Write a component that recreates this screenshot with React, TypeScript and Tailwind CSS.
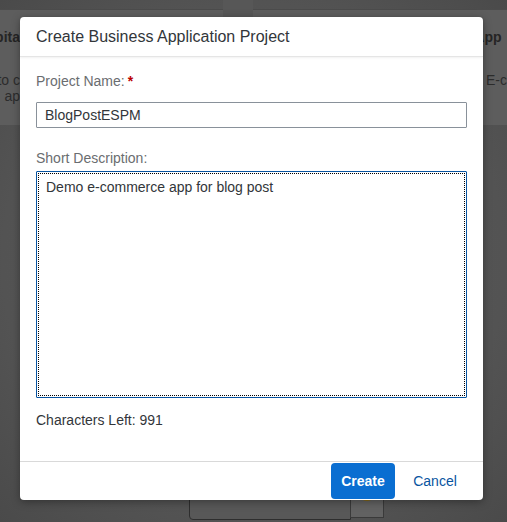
import React from 'react';

const font = { fontFamily: '"Liberation Sans", Arial, sans-serif' };

export default function App() {
  return (
    <div
      className="relative w-[507px] h-[522px] overflow-hidden bg-[radial-gradient(ellipse_at_center,#5b5b5b_0%,#535353_70%,#4a4a4a_100%)]"
      style={font}
    >
      {/* dimmed page behind the dialog */}
      <div className="flex h-[126px]">
        <div className="w-[232px] h-[116px] mt-[9px] bg-[#5d5d5d] border-t border-[#4c4c4c]">
          <div className="w-[20px] overflow-hidden">
            <div className="flex justify-end pt-[17px] text-[14px] font-bold text-[#252525] whitespace-nowrap">pita</div>
            <div className="mt-[24px] text-[14px] leading-[16px] text-[#2c2c2c] whitespace-nowrap">
              <div className="flex justify-end">to c</div>
              <div className="flex justify-end">ap</div>
            </div>
          </div>
        </div>
        <div className="w-[31px] bg-[#575757]" />
        <div className="flex-1 h-[116px] mt-[9px] bg-[#5d5d5d] border-t border-[#4c4c4c] pl-[221px]">
          <div className="overflow-hidden">
            <div className="pt-[17px] text-[14px] font-bold text-[#252525] whitespace-nowrap">App</div>
            <div className="mt-[24px] text-[14px] leading-[16px] text-[#2c2c2c] whitespace-nowrap">e E-c</div>
          </div>
        </div>
      </div>

      {/* illustration peeking out below */}
      <div className="absolute left-[189px] top-[480px] w-[162px] h-[40px] border border-[#2e2e2e] rounded-bl-[4px] bg-[#585858]" />
      <div className="absolute left-[350px] top-[490px] w-[34px] h-[28px] border border-[#3a3a3a] bg-[#626262] flex items-start justify-center">
        <div className="w-[16px] h-[16px] -mt-[6px] rounded-full border-[3px] border-[#8a6a10]" />
      </div>

      {/* dialog */}
      <div className="absolute left-[20px] top-[17px] w-[463px] h-[483px] bg-white rounded-[4px] shadow-[0_2px_8px_rgba(0,0,0,0.35)] flex flex-col">
        <header className="h-[40px] px-4 flex items-center border-b border-[#e5e5e5] shadow-[0_1px_2px_rgba(0,0,0,0.06)] text-[16px] text-[#32363a]">
          Create Business Application Project
        </header>

        <div className="flex-1 px-4 pt-[15px] flex flex-col">
          <label className="text-[14px] leading-[18px] text-[#6a6d70]">
            Project Name:<span className="text-[#bb0000] font-bold ml-[3px]">*</span>
          </label>
          <div className="mt-[12px] h-[26px] border border-[#89919a] rounded-[1px] flex items-center px-[8px] text-[14px] text-[#32363a]">
            BlogPostESPM
          </div>

          <label className="mt-[21px] text-[14px] leading-[18px] text-[#6a6d70]">Short Description:</label>
          <div className="mt-[4px] h-[227px] border border-[#0854a0] rounded-[1px] p-[1px]">
            <div className="h-full border border-dotted border-black px-[7px] pt-[4px] text-[14px] leading-[18px] text-[#32363a]">
              Demo e-commerce app for blog post
            </div>
          </div>

          <div className="mt-[13px] text-[14px] leading-[18px] text-[#32363a]">Characters Left: 991</div>
        </div>

        <footer className="h-[39px] border-t border-[#d9d9d9] flex items-center justify-end gap-[6px] pr-[14px]">
          <button className="w-[64px] h-[36px] rounded-[4px] bg-[#0a6ed1] text-white text-[14px] font-bold">
            Create
          </button>
          <button className="w-[68px] h-[36px] rounded-[4px] text-[#0854a0] text-[14px]">Cancel</button>
        </footer>
      </div>
    </div>
  );
}
